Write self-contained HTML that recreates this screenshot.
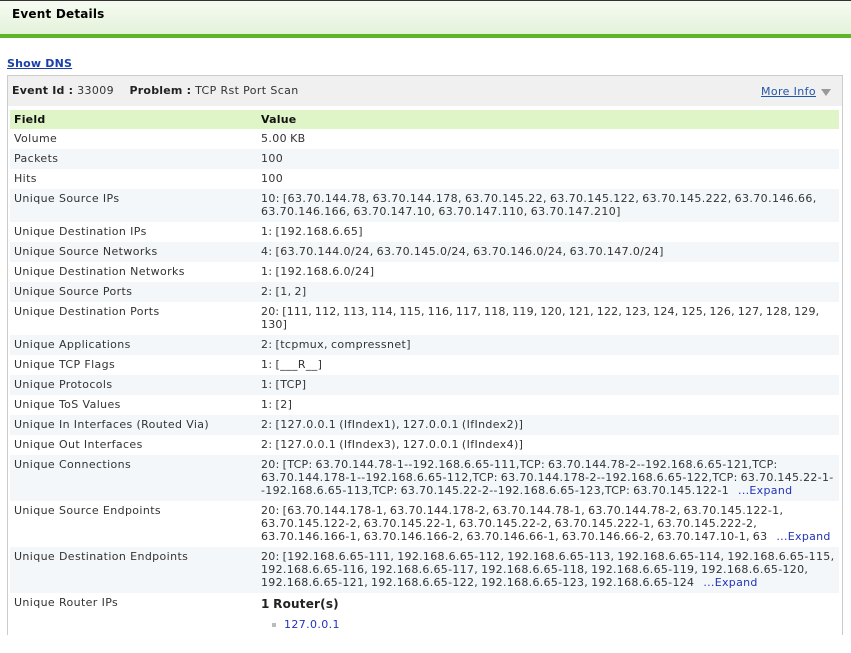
<!DOCTYPE html>
<html><head><meta charset="utf-8"><style>
*{margin:0;padding:0;box-sizing:border-box}
body{width:851px;height:629px;overflow:hidden;background:#fff;font-family:"DejaVu Sans",Verdana,sans-serif;font-size:11px;letter-spacing:.38px;word-spacing:-.8px;color:#333;position:relative}
.top{position:absolute;left:0;top:0;width:851px;height:35px;border-top:1px solid #333;background:linear-gradient(#f6fbf2,#e3f2da)}
.top b{position:absolute;left:12px;top:6px;font-size:12px;color:#000;letter-spacing:.2px;word-spacing:0}
.gl{position:absolute;left:0;top:34px;width:851px;height:4px;background:#5fb52a}
.dns{position:absolute;left:7px;top:57px;font-weight:bold;color:#1a3faa;text-decoration:underline;font-size:11px;letter-spacing:.2px;word-spacing:0}
.box{position:absolute;left:7px;top:75px;width:836px;height:560px;border:1px solid #ccc;border-bottom:none}
.hd{height:30px;background:#f0f0f0;position:relative}
.hd .l{position:absolute;left:4px;top:8px;color:#333;word-spacing:0}
.hd b{color:#222;letter-spacing:.2px}
.mi{position:absolute;right:12px;top:9px;color:#2255aa;text-decoration:underline;word-spacing:0}
.tri{position:absolute;right:11px;top:13px;width:0;height:0;border-left:5px solid transparent;border-right:5px solid transparent;border-top:7px solid #999}
.tb{position:absolute;left:2px;top:34px;width:829px}
.r{display:flex;line-height:13px;padding:3px 0 4px}
.r .a{width:251px;padding-left:4px;flex:none;word-spacing:0}
.r .b{flex:1;white-space:nowrap;overflow:hidden}
.r.h{background:#dff5c8;font-weight:bold;color:#111;height:19px;padding-top:3px;letter-spacing:.2px}
.x{color:#2233bb;word-spacing:0}
</style></head><body>
<div class="top"><b>Event Details</b></div><div class="gl"></div>
<div class="dns">Show DNS</div>
<div class="box">
<div class="hd"><span class="l"><b>Event Id :</b> 33009 &nbsp;&nbsp; <b>Problem :</b> TCP Rst Port Scan</span><span class="mi" style="right:26px">More Info</span><span class="tri"></span></div>
<div class="tb">
<div class="r h"><div class="a">Field</div><div class="b">Value</div></div>
<div class="r" style="background:#fff"><div class="a">Volume</div><div class="b">5.00 KB</div></div>
<div class="r" style="background:#f4f7f9"><div class="a">Packets</div><div class="b">100</div></div>
<div class="r" style="background:#fff"><div class="a">Hits</div><div class="b">100</div></div>
<div class="r" style="background:#f4f7f9"><div class="a">Unique Source IPs</div><div class="b">10: [63.70.144.78, 63.70.144.178, 63.70.145.22, 63.70.145.122, 63.70.145.222, 63.70.146.66,<br>63.70.146.166, 63.70.147.10, 63.70.147.110, 63.70.147.210]</div></div>
<div class="r" style="background:#fff"><div class="a">Unique Destination IPs</div><div class="b">1: [192.168.6.65]</div></div>
<div class="r" style="background:#f4f7f9"><div class="a">Unique Source Networks</div><div class="b">4: [63.70.144.0/24, 63.70.145.0/24, 63.70.146.0/24, 63.70.147.0/24]</div></div>
<div class="r" style="background:#fff"><div class="a">Unique Destination Networks</div><div class="b">1: [192.168.6.0/24]</div></div>
<div class="r" style="background:#f4f7f9"><div class="a">Unique Source Ports</div><div class="b">2: [1, 2]</div></div>
<div class="r" style="background:#fff"><div class="a">Unique Destination Ports</div><div class="b" style="letter-spacing:.2px">20: [111, 112, 113, 114, 115, 116, 117, 118, 119, 120, 121, 122, 123, 124, 125, 126, 127, 128, 129,<br>130]</div></div>
<div class="r" style="background:#f4f7f9"><div class="a">Unique Applications</div><div class="b">2: [tcpmux, compressnet]</div></div>
<div class="r" style="background:#fff"><div class="a">Unique TCP Flags</div><div class="b">1: [___R__]</div></div>
<div class="r" style="background:#f4f7f9"><div class="a">Unique Protocols</div><div class="b">1: [TCP]</div></div>
<div class="r" style="background:#fff"><div class="a">Unique ToS Values</div><div class="b">1: [2]</div></div>
<div class="r" style="background:#f4f7f9"><div class="a">Unique In Interfaces (Routed Via)</div><div class="b">2: [127.0.0.1 (IfIndex1), 127.0.0.1 (IfIndex2)]</div></div>
<div class="r" style="background:#fff"><div class="a">Unique Out Interfaces</div><div class="b">2: [127.0.0.1 (IfIndex3), 127.0.0.1 (IfIndex4)]</div></div>
<div class="r" style="background:#f4f7f9"><div class="a">Unique Connections</div><div class="b" style="letter-spacing:.3px">20: [TCP: 63.70.144.78-1--192.168.6.65-111,TCP: 63.70.144.78-2--192.168.6.65-121,TCP:<br>63.70.144.178-1--192.168.6.65-112,TCP: 63.70.144.178-2--192.168.6.65-122,TCP: 63.70.145.22-1-<br>-192.168.6.65-113,TCP: 63.70.145.22-2--192.168.6.65-123,TCP: 63.70.145.122-1 &nbsp;&nbsp;<span class="x">...Expand</span></div></div>
<div class="r" style="background:#fff"><div class="a">Unique Source Endpoints</div><div class="b" style="letter-spacing:.3px">20: [63.70.144.178-1, 63.70.144.178-2, 63.70.144.78-1, 63.70.144.78-2, 63.70.145.122-1,<br>63.70.145.122-2, 63.70.145.22-1, 63.70.145.22-2, 63.70.145.222-1, 63.70.145.222-2,<br>63.70.146.166-1, 63.70.146.166-2, 63.70.146.66-1, 63.70.146.66-2, 63.70.147.10-1, 63 &nbsp;&nbsp;<span class="x">...Expand</span></div></div>
<div class="r" style="background:#f4f7f9"><div class="a">Unique Destination Endpoints</div><div class="b" style="letter-spacing:.3px">20: [192.168.6.65-111, 192.168.6.65-112, 192.168.6.65-113, 192.168.6.65-114, 192.168.6.65-115,<br>192.168.6.65-116, 192.168.6.65-117, 192.168.6.65-118, 192.168.6.65-119, 192.168.6.65-120,<br>192.168.6.65-121, 192.168.6.65-122, 192.168.6.65-123, 192.168.6.65-124 &nbsp;&nbsp;<span class="x">...Expand</span></div></div>
<div class="r" style="background:#fff;height:60px"><div class="a">Unique Router IPs</div><div class="b"><div style="font-weight:bold;font-size:12px;margin-top:2px;color:#222;letter-spacing:.2px">1 Router(s)</div><div style="margin-top:7px;padding-left:23px;position:relative;color:#2233bb"><span style="position:absolute;left:11px;top:5px;width:4px;height:4px;background:#bbb"></span>127.0.0.1</div></div></div>
</div></div>
</body></html>
